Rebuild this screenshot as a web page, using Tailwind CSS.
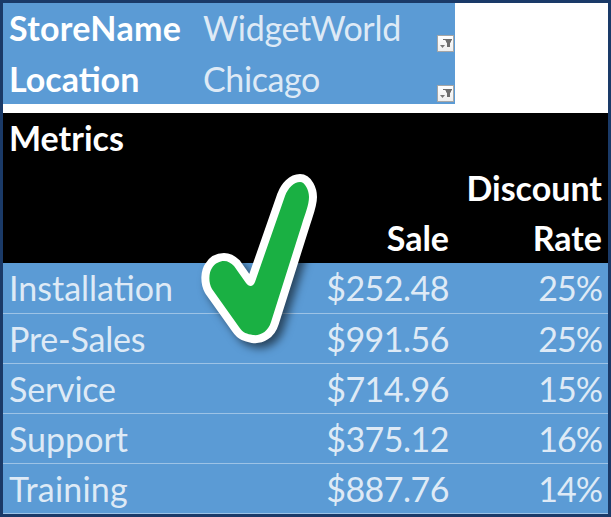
<!doctype html>
<html>
<head>
<meta charset="utf-8">
<script src="https://cdn.jsdelivr.net/npm/@tailwindcss/browser@4"></script>
</head>
<body class="m-0 overflow-hidden">
<div class="relative w-[611px] h-[517px] bg-[#1a3a68] p-[3px] font-['Lato','Carlito',sans-serif] text-[34px] leading-none">
  <div class="w-[605px] h-[511px] bg-white flex flex-col">

    <!-- filter block -->
    <div class="w-[452px] h-[101px] bg-[#5b9bd5] text-[#deeaf6]">
      <div class="h-[50px] flex items-center pl-[6px] relative">
        <div class="w-[194px] font-bold text-white tracking-[0.3px]">StoreName</div>
        <div class="tracking-[-0.3px]">WidgetWorld</div>
        <div class="absolute right-px bottom-px w-[17px] h-[17px] border border-[#a6a6a6] bg-gradient-to-b from-white to-[#eeeeee]">
          <svg width="15" height="15" viewBox="0 0 15 15"><path d="M5 3h9v1l-1 1v1l-1 1v4H9V7L8 6V5L7 4H5z" fill="#6e6e6e"/><path d="M2 9h5l-2.500 3z" fill="#777"/></svg>
        </div>
      </div>
      <div class="h-[51px] flex items-center pl-[6px] relative">
        <div class="w-[194px] font-bold text-white">Location</div>
        <div class="tracking-[-0.4px]">Chicago</div>
        <div class="absolute right-px bottom-[2px] w-[17px] h-[17px] border border-[#a6a6a6] bg-gradient-to-b from-white to-[#eeeeee]">
          <svg width="15" height="15" viewBox="0 0 15 15"><path d="M5 3h9v1l-1 1v1l-1 1v4H9V7L8 6V5L7 4H5z" fill="#6e6e6e"/><path d="M2 9h5l-2.500 3z" fill="#777"/></svg>
        </div>
      </div>
    </div>

    <!-- table header -->
    <div class="mt-[9px] h-[150px] bg-black text-white font-bold flex flex-col">
      <div class="h-[50px] flex items-center pl-[6px]">Metrics</div>
      <div class="h-[50px] flex items-center justify-end pr-[6px]">Discount</div>
      <div class="h-[50px] flex items-center">
        <div class="w-[446px] text-right">Sale</div>
        <div class="w-[153px] text-right">Rate</div>
      </div>
    </div>

    <!-- table rows -->
    <div class="h-[251px] bg-[#5b9bd5] text-[#deeaf6] flex flex-col">
      <div class="h-[51px] flex items-center border-b border-[#9dc3e6]">
        <div class="w-[200px] pl-[6px]">Installation</div>
        <div class="w-[246px] text-right tracking-[-0.5px]">$252.48</div>
        <div class="w-[153px] text-right tracking-[-1px]">25%</div>
      </div>
      <div class="h-[50px] flex items-center border-b border-[#9dc3e6]">
        <div class="w-[200px] pl-[6px] tracking-[-0.2px]">Pre-Sales</div>
        <div class="w-[246px] text-right tracking-[-0.5px]">$991.56</div>
        <div class="w-[153px] text-right tracking-[-1px]">25%</div>
      </div>
      <div class="h-[50px] flex items-center border-b border-[#9dc3e6]">
        <div class="w-[200px] pl-[6px] tracking-[-0.2px]">Service</div>
        <div class="w-[246px] text-right tracking-[-0.5px]">$714.96</div>
        <div class="w-[153px] text-right tracking-[-1px]">15%</div>
      </div>
      <div class="h-[50px] flex items-center border-b border-[#9dc3e6]">
        <div class="w-[200px] pl-[6px]">Support</div>
        <div class="w-[246px] text-right tracking-[-0.5px]">$375.12</div>
        <div class="w-[153px] text-right tracking-[-1px]">16%</div>
      </div>
      <div class="h-[50px] flex items-center border-b border-[#9dc3e6]">
        <div class="w-[200px] pl-[6px] tracking-[0.2px]">Training</div>
        <div class="w-[246px] text-right tracking-[-0.5px]">$887.76</div>
        <div class="w-[153px] text-right tracking-[-1px]">14%</div>
      </div>
    </div>
  </div>

  <!-- check mark over the table -->
  <svg class="absolute left-[190px] top-[165px] drop-shadow-[5px_5px_4px_rgba(0,0,0,0.55)]" width="140" height="190" viewBox="190 165 140 190">
    <path d="M300 182C305 182 309 190 309 197C309 205 305 214 302 224L271 322C268 332 260 336 253 335C247 334 243 333 239 327L212 289C208 282 209 272 212 268C215 263 220 261 224 261C228 261 231 263 234 266L246 283C249 287 253 287 255 282L285 196C288 188 294 182 300 182Z" fill="#1ab043" stroke="#fff" stroke-width="16" stroke-linejoin="round" paint-order="stroke"/>
  </svg>
</div>
</body>
</html>
